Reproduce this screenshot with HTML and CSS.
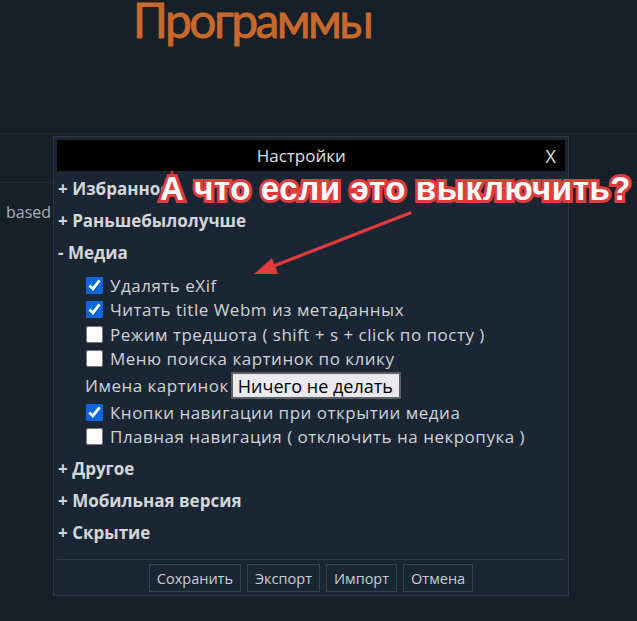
FILE: index.html
```html
<!DOCTYPE html>
<html lang="ru">
<head>
<meta charset="utf-8">
<title>Программы</title>
<link rel="stylesheet" href="styles.css">
</head>
<body>
<header class="top">
  <h1 class="title">Программы</h1>
</header>
<div class="band"></div>
<div class="page-text">based</div>

<div class="modal">
  <div class="modal-head">
    <span class="modal-title">Настройки</span>
    <span class="modal-close">X</span>
  </div>
  <div class="modal-body">
    <div class="section">+ Избранное</div>
    <div class="section">+ Раньшебылолучше</div>
    <div class="section">- Медиа</div>
    <div class="options">
      <label class="opt"><input type="checkbox" checked> Удалять eXif</label>
      <label class="opt"><input type="checkbox" checked> Читать title Webm из метаданных</label>
      <label class="opt"><input type="checkbox"> Режим тредшота ( shift + s + click по посту )</label>
      <label class="opt"><input type="checkbox"> Меню поиска картинок по клику</label>
      <div class="opt sel-row">Имена картинок <select class="sel"><option>Ничего не делать</option></select></div>
      <label class="opt"><input type="checkbox" checked> Кнопки навигации при открытии медиа</label>
      <label class="opt"><input type="checkbox"> Плавная навигация ( отключить на некропука )</label>
    </div>
    <div class="section">+ Другое</div>
    <div class="section">+ Мобильная версия</div>
    <div class="section">+ Скрытие</div>
  </div>
  <div class="modal-foot">
    <button class="btn">Сохранить</button>
    <button class="btn">Экспорт</button>
    <button class="btn">Импорт</button>
    <button class="btn">Отмена</button>
  </div>
</div>

<div class="callout">А что если это выключить?</div>
<svg class="arrow" width="637" height="621" viewBox="0 0 637 621">
  <line x1="410" y1="213" x2="266" y2="269" stroke="#e33a3c" stroke-width="3.2" stroke-linecap="round"/>
  <polygon points="254,274 272,258 278,274" fill="#e33a3c"/>
</svg>
</body>
</html>
```
FILE: styles.css
```css
html, body {
  margin: 0;
  padding: 0;
}
body {
  background: #171f29;
  font-family: "Open Sans", "DejaVu Sans", sans-serif;
  color: #c9ced4;
  width: 637px;
  height: 621px;
  overflow: hidden;
  position: relative;
}
.top {
  height: 133px;
  border-bottom: 1px solid #1f2935;
  text-align: center;
}
.title {
  margin: 0;
  padding: 0 133px 0 0;
  font-family: Lato, "Open Sans", sans-serif;
  font-weight: 400;
  font-size: 48px;
  line-height: 40px;
  color: #c8692b;
  letter-spacing: -2.6px;
  -webkit-text-stroke: 0.8px #c8692b;
}
.band {
  height: 48px;
  border-bottom: 1px solid #1f2935;
}
.page-text {
  padding: 18px 0 0 6px;
  font-size: 16px;
  color: #a9b0b8;
}
.modal {
  position: absolute;
  left: 53px;
  top: 136px;
  width: 508px;
  height: 452px;
  padding: 3px 3px 3px;
  background: #1b2634;
  border: 1px solid #2b3745;
  display: flex;
  flex-direction: column;
}
.modal-head {
  height: 31px;
  background: #000;
  display: flex;
  align-items: center;
  padding: 0 9px 0 0;
  font-size: 17px;
  color: #dde1e5;
}
.modal-title {
  flex: 1;
  text-align: center;
}
.modal-close {
  font-size: 18px;
}
.modal-body {
  padding: 2px 0 0 1px;
  flex: 1;
}
.section {
  height: 32px;
  line-height: 32px;
  font-size: 17px;
  font-weight: 700;
  color: #d3d6da;
}
.options {
  padding: 4px 0 4px 28px;
}
.opt {
  display: flex;
  align-items: center;
  height: 24.5px;
  font-size: 17px;
  letter-spacing: 0.5px;
  color: #cfd3d8;
  white-space: nowrap;
}
.opt input {
  width: 17px;
  height: 17px;
  margin: 0 7px 0 0;
  accent-color: #0b67e0;
}
.sel-row {
  height: 29px;
  margin-left: -1px;
}
.sel {
  margin-left: 2px;
  height: 27px;
  font-family: "Open Sans", sans-serif;
  font-size: 18px;
  color: #000;
  background: #e9e9ee;
  border: 2px solid #5c5f66;
  border-radius: 0;
  padding: 0 5px;
  appearance: none;
  -webkit-appearance: none;
}
.modal-foot {
  border-top: 1px solid #2b3745;
  padding: 4px 0 0;
  display: flex;
  justify-content: center;
  gap: 6px;
}
.btn {
  height: 28px;
  padding: 0 7px;
  background: #1b2634;
  border: 1px solid #364352;
  color: #c9ced4;
  font-family: "Open Sans", sans-serif;
  font-size: 14.5px;
}
.callout {
  position: absolute;
  left: 160px;
  top: 170px;
  font-family: "Liberation Sans", Arial, sans-serif;
  font-weight: 700;
  font-size: 33px;
  color: #fff;
  -webkit-text-stroke: 6px #e23b3d;
  paint-order: stroke fill;
  letter-spacing: 0.6px;
  white-space: nowrap;
}
.arrow {
  position: absolute;
  left: 0;
  top: 0;
  pointer-events: none;
}
```
